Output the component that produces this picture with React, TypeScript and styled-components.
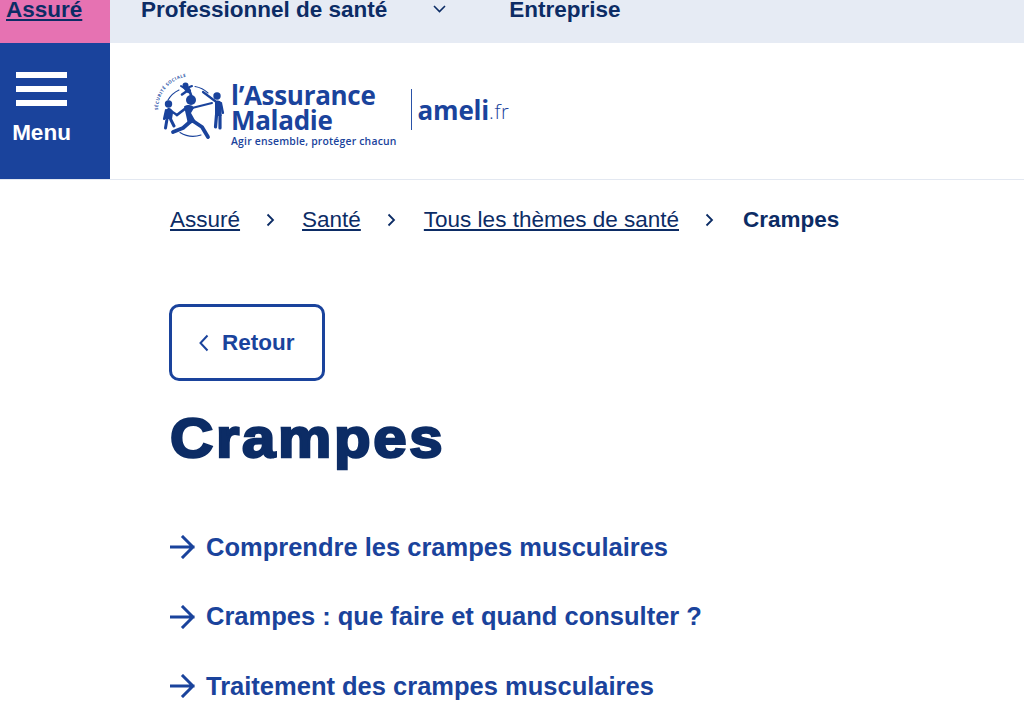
import React from "react";
import styled, { createGlobalStyle } from "styled-components";

const Global = createGlobalStyle`
  html, body { margin: 0; padding: 0; background: #fff; overflow: hidden; }
  body { font-family: "Liberation Sans", Arial, sans-serif; color: #0c2c65; }
`;
const Page = styled.div`width: 1024px; height: 707px; overflow: hidden; display: flex; flex-direction: column;`;
const TopBar = styled.nav`height: 43px; flex: none; display: flex; background: #e6ebf4; overflow: hidden;`;
const ActiveTab = styled.a`
  width: 110px; flex: none; box-sizing: border-box; padding-left: 6px; background: #e672b2; color: #0c2c65;
  font-size: 22.5px; font-weight: 700; line-height: 20px; text-decoration: underline;
`;
const TopItems = styled.div`display: flex; align-items: flex-start; padding-left: 31px;`;
const TopItem = styled.span`font-size: 22.5px; font-weight: 700; line-height: 20px; color: #0c2c65;`;
const Chevron = styled.svg`margin: 5px 0 0 46px; flex: none;`;
const EntrepriseItem = styled(TopItem)`margin-left: 63px;`;
const Header = styled.header`height: 137px; flex: none; display: flex; box-sizing: border-box; border-bottom: 1px solid #e3e8f1;`;
const MenuButton = styled.button`
  width: 110px; height: 136px; flex: none; border: 0; padding: 29px 27px 0 0; background: #1a439c; color: #fff;
  display: flex; flex-direction: column; align-items: center; font-family: inherit;
`;
const Bars = styled.span`display: flex; flex-direction: column; gap: 8px; width: 51px;`;
const Bar = styled.span`height: 6px; background: #fff; display: block;`;
const MenuLabel = styled.span`font-size: 22.5px; font-weight: 700; line-height: 26px; margin-top: 14px;`;
const LogoArea = styled.a`display: flex; align-items: flex-start; padding: 22px 0 0 40px;`;
const Figures = styled.svg`flex: none;`;
const Brand = styled.div`display: flex; flex-direction: column; margin-left: 1px; color: #1a439c; font-family: "Open Sans", sans-serif;`;
const BrandName = styled.div`font-size: 26px; font-weight: 700; line-height: 25px; margin-top: 18px; letter-spacing: -0.3px;`;
const BrandTag = styled.div`font-size: 10.4px; font-weight: 600; line-height: 14px; margin-top: 1px; letter-spacing: 0.2px; white-space: nowrap;`;
const Ameli = styled.div`
  margin: 24px 0 0 14px; height: 41px; box-sizing: border-box; border-left: 1px solid #2a52a8; padding-left: 6px;
  display: flex; align-items: center; color: #1a439c; font-family: "Open Sans", sans-serif;
`;
const AmeliName = styled.span`font-size: 26px; font-weight: 700; letter-spacing: -0.2px;`;
const AmeliTld = styled.span`font-size: 20px; font-weight: 300; margin-top: 4px; letter-spacing: 0.6px;`;
const Main = styled.main`display: flex; flex-direction: column; align-items: flex-start; padding: 27px 0 0 170px;`;
const Crumbs = styled.div`display: flex; align-items: center; font-size: 22.5px; line-height: 26px; height: 26px;`;
const CrumbLink = styled.a`color: #0c2c65; text-decoration: underline;`;
const CrumbSep = styled.svg<{ $after: number }>`margin: 0 ${(p) => p.$after}px 0 26px; flex: none;`;
const CrumbCurrent = styled.span`font-weight: 700;`;
const BackButton = styled.a`
  margin: 71px 0 0 -1px; width: 156px; height: 77px; box-sizing: border-box; border: 3px solid #1a439c; border-radius: 10px;
  display: flex; align-items: center; padding-left: 27px; gap: 13px; color: #1a439c; font-size: 22.5px; font-weight: 700;
`;
const Title = styled.h1`
  margin: 23px 0 0; font-size: 56px; line-height: 68px; font-weight: 700; color: #0c2c65; letter-spacing: 2.5px;
  -webkit-text-stroke: 2.4px #0c2c65; transform: scaleX(1.07); transform-origin: left center;
`;
const LinkList = styled.ul`list-style: none; margin: 60px 0 0; padding: 0; display: flex; flex-direction: column; gap: 39.5px;`;
const LinkRow = styled.li`display: flex; align-items: center; height: 30px; color: #1a439c; font-size: 25.5px; font-weight: 700; gap: 11px;`;

const Arrow = () => (
  <svg width="25" height="24" viewBox="0 0 25 24" fill="none" stroke="#1a439c" strokeWidth="3" strokeLinecap="square">
    <path d="M1.5 12H23M13 2l10 10-10 10" />
  </svg>
);

const Separator = ({ after }: { after: number }) => (
  <CrumbSep $after={after} width="9" height="14" viewBox="0 0 9 14" fill="none" stroke="#0c2c65" strokeWidth="1.8">
    <path d="M1.5 1.5L7 7l-5.5 5.5" />
  </CrumbSep>
);

const LogoFigures = () => (
  <Figures width="80" height="80" viewBox="0 0 80 80" fill="#1a439c" stroke="none" strokeLinecap="round" strokeLinejoin="round">
    <defs><path id="seal" d="M8 45A33 33 0 0 1 47 12" /></defs>
    <text fontFamily="'Open Sans', sans-serif" fontSize="4.4" fontWeight="700" letterSpacing="0.5" fill="#2f56a8">
      <textPath href="#seal">SÉCURITÉ SOCIALE</textPath>
    </text>
    <g fill="none" stroke="#1a439c" strokeWidth="1.1">
      <path d="M18 35A25 25 0 0 1 29 25" />
      <path d="M45 21.5A25 25 0 0 1 58 28" />
      <path d="M30 67.5A25 25 0 0 0 51 70" />
    </g>
    <circle cx="41" cy="35" r="5" />
    <circle cx="18.5" cy="39" r="3.7" />
    <circle cx="67" cy="31" r="3.7" />
    <circle cx="35.5" cy="20.5" r="3" />
    <path d="M34 41.5C38 39 43 40 44 43L41 48L46 57L38 59L36 50z" />
    <path d="M18 43C21 43 23 45 23 48L22 54H15L15 46z" />
    <path d="M65 35.5C69 35 72 36 72 40L71.5 51H65z" />
    <g fill="none" stroke="#1a439c">
      <path d="M36 43L27 50" strokeWidth="2.8" />
      <path d="M42 43L62 38" strokeWidth="2" />
      <path d="M41 56L33 63L23 67" strokeWidth="3.8" />
      <path d="M43 56L52 62L58 72" strokeWidth="3.8" />
      <path d="M21 46L27 50" strokeWidth="2.2" />
      <path d="M16 45L14 54" strokeWidth="2.2" />
      <path d="M17 54L16 60L15.5 63" strokeWidth="3" />
      <path d="M20.5 54L24 61" strokeWidth="3" />
      <path d="M65 36L53 27" strokeWidth="2.2" />
      <path d="M71 38L73 48" strokeWidth="2.2" />
      <path d="M66.5 50L65.5 62" strokeWidth="3.2" />
      <path d="M70 50L70 63" strokeWidth="3.2" />
      <path d="M36 23L38.5 25.5" strokeWidth="5" />
      <path d="M37 23L42 21" strokeWidth="2" />
      <path d="M34 23L31 21" strokeWidth="2" />
      <path d="M37 26L32 29.5" strokeWidth="2.6" />
      <path d="M39.5 26L41 30" strokeWidth="2.6" />
    </g>
  </Figures>
);

export default function App() {
  return (
    <Page>
      <Global />
      <TopBar>
        <ActiveTab>Assuré</ActiveTab>
        <TopItems>
          <TopItem>Professionnel de santé</TopItem>
          <Chevron width="13" height="8" viewBox="0 0 13 8" fill="none" stroke="#0c2c65" strokeWidth="1.6">
            <path d="M1 1l5.5 5.5L12 1" />
          </Chevron>
          <EntrepriseItem>Entreprise</EntrepriseItem>
        </TopItems>
      </TopBar>
      <Header>
        <MenuButton>
          <Bars><Bar /><Bar /><Bar /></Bars>
          <MenuLabel>Menu</MenuLabel>
        </MenuButton>
        <LogoArea>
          <LogoFigures />
          <Brand>
            <BrandName>l’Assurance<br />Maladie</BrandName>
            <BrandTag>Agir ensemble, protéger chacun</BrandTag>
          </Brand>
          <Ameli><AmeliName>ameli</AmeliName><AmeliTld>.fr</AmeliTld></Ameli>
        </LogoArea>
      </Header>
      <Main>
        <Crumbs>
          <CrumbLink>Assuré</CrumbLink>
          <Separator after={27} />
          <CrumbLink>Santé</CrumbLink>
          <Separator after={28} />
          <CrumbLink>Tous les thèmes de santé</CrumbLink>
          <Separator after={29} />
          <CrumbCurrent>Crampes</CrumbCurrent>
        </Crumbs>
        <BackButton>
          <svg width="10" height="18" viewBox="0 0 10 18" fill="none" stroke="#1a439c" strokeWidth="2"><path d="M8.5 1.5L1.5 9l7 7.5" /></svg>
          Retour
        </BackButton>
        <Title>Crampes</Title>
        <LinkList>
          <LinkRow><Arrow />Comprendre les crampes musculaires</LinkRow>
          <LinkRow><Arrow />Crampes : que faire et quand consulter ?</LinkRow>
          <LinkRow><Arrow />Traitement des crampes musculaires</LinkRow>
        </LinkList>
      </Main>
    </Page>
  );
}
